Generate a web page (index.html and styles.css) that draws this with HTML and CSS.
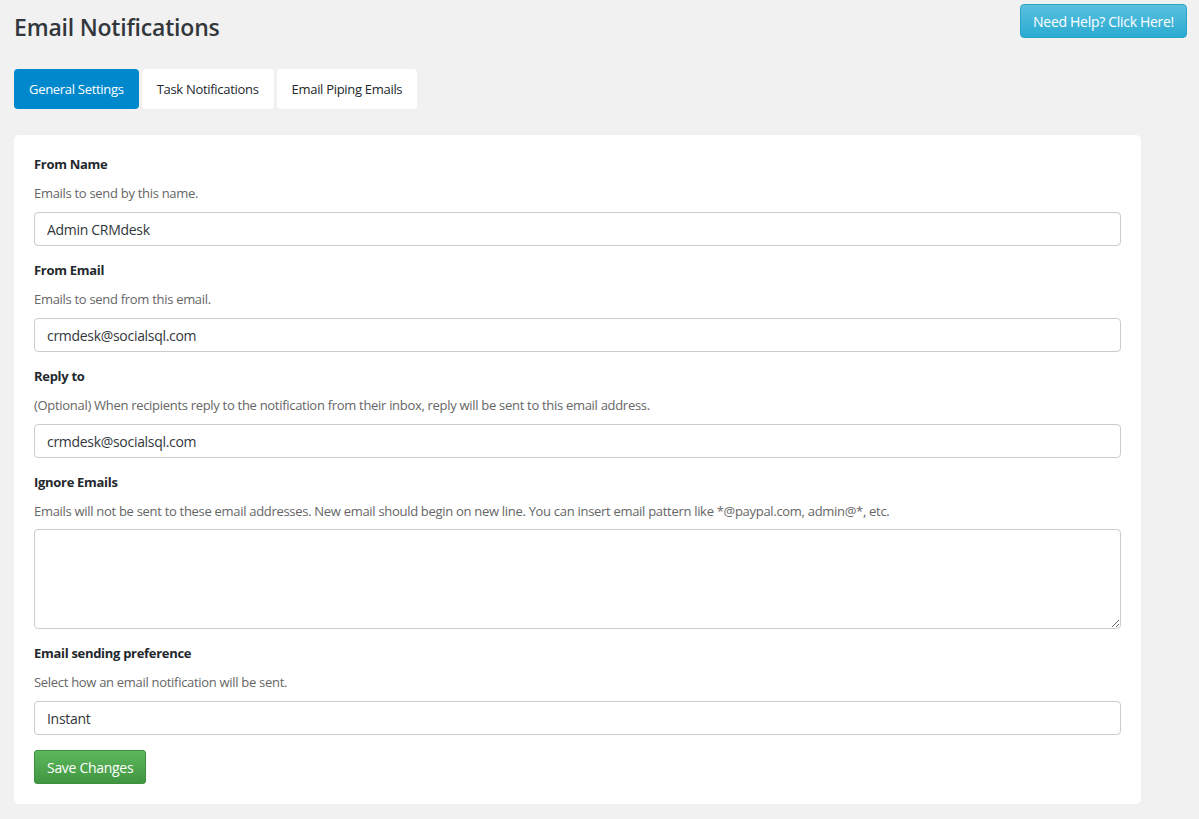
FILE: index.html
```html
<!DOCTYPE html>
<html lang="en">
<head>
    <meta charset="UTF-8">
    <meta name="viewport" content="width=device-width, initial-scale=1.0">
    <title>Email Notifications</title>
    <link rel="stylesheet" href="styles.css">
</head>
<body>
    <div class="wrap">
        <div class="top">
            <h1>Email Notifications</h1>
            <button class="help-btn">Need Help? Click Here!</button>
        </div>

        <nav class="tabs">
            <a class="tab active" href="#">General Settings</a>
            <a class="tab" href="#">Task Notifications</a>
            <a class="tab" href="#">Email Piping Emails</a>
        </nav>

        <form class="card">
            <div class="field">
                <label>From Name</label>
                <p class="desc">Emails to send by this name.</p>
                <input class="control" type="text" value="Admin CRMdesk">
            </div>
            <div class="field">
                <label>From Email</label>
                <p class="desc">Emails to send from this email.</p>
                <input class="control" type="text" value="crmdesk@socialsql.com">
            </div>
            <div class="field">
                <label>Reply to</label>
                <p class="desc">(Optional) When recipients reply to the notification from their inbox, reply will be sent to this email address.</p>
                <input class="control" type="text" value="crmdesk@socialsql.com">
            </div>
            <div class="field">
                <label>Ignore Emails</label>
                <p class="desc tight">Emails will not be sent to these email addresses. New email should begin on new line. You can insert email pattern like *@paypal.com, admin@*, etc.</p>
                <textarea class="control area"></textarea>
            </div>
            <div class="field">
                <label>Email sending preference</label>
                <p class="desc">Select how an email notification will be sent.</p>
                <select class="control select">
                    <option>Instant</option>
                </select>
            </div>
            <button class="save-btn" type="button">Save Changes</button>
        </form>
    </div>
</body>
</html>
```

FILE: styles.css
```css
html, body {
    margin: 0;
    padding: 0;
    background: #f1f1f1;
    font-family: "Open Sans", "Noto Sans", sans-serif;
    font-size: 13px;
    letter-spacing: -0.3px;
    color: #23282d;
}

.wrap {
    width: 1127px;
    padding: 0 0 0 14px;
}

.top {
    display: flex;
    justify-content: space-between;
    align-items: flex-start;
    height: 69px;
    width: 1173px;
}

h1 {
    margin: 11px 0 0;
    font-size: 23px;
    font-weight: 600;
    line-height: 32px;
    letter-spacing: -0.2px;
    color: #32373c;
}

.help-btn {
    margin-top: 4px;
    height: 34px;
    padding: 0 12px;
    border: 1px solid #28a4c9;
    border-radius: 4px;
    background: linear-gradient(#5bc0de, #2aabd2);
    color: #fff;
    font-family: inherit;
    font-size: 14px;
    letter-spacing: -0.3px;
    cursor: pointer;
}

.tabs {
    display: flex;
    gap: 3px;
    height: 40px;
}

.tab {
    display: flex;
    align-items: center;
    padding: 0 15px;
    background: #fff;
    border-radius: 4px;
    color: #23282d;
    text-decoration: none;
}

.tab.active {
    background: #0088cc;
    color: #fff;
}

.card {
    display: block;
    margin-top: 26px;
    background: #fff;
    border-radius: 5px;
    padding: 20px 20px 20px;
}

.field {
    margin-bottom: 15px;
}

.field label {
    display: block;
    font-weight: 700;
    line-height: 18px;
}

.desc {
    margin: 11px 0 10px;
    line-height: 18px;
    color: #666;
}

.desc.tight {
    margin-bottom: 9px;
}

.control {
    display: block;
    box-sizing: border-box;
    width: 100%;
    height: 34px;
    margin: 0;
    padding: 0 12px;
    border: 1px solid #ccc;
    border-radius: 4px;
    background: #fff;
    font-family: inherit;
    font-size: 14px;
    letter-spacing: -0.3px;
    color: #32373c;
}

.area {
    height: 100px;
    padding: 6px 12px;
}

.select {
    appearance: none;
    -webkit-appearance: none;
}

.save-btn {
    height: 34px;
    padding: 0 12px;
    border: 1px solid #3e8f3e;
    border-radius: 3px;
    background: linear-gradient(#5cb85c, #419641);
    color: #fff;
    font-family: inherit;
    font-size: 14px;
    letter-spacing: -0.3px;
    cursor: pointer;
}
```
